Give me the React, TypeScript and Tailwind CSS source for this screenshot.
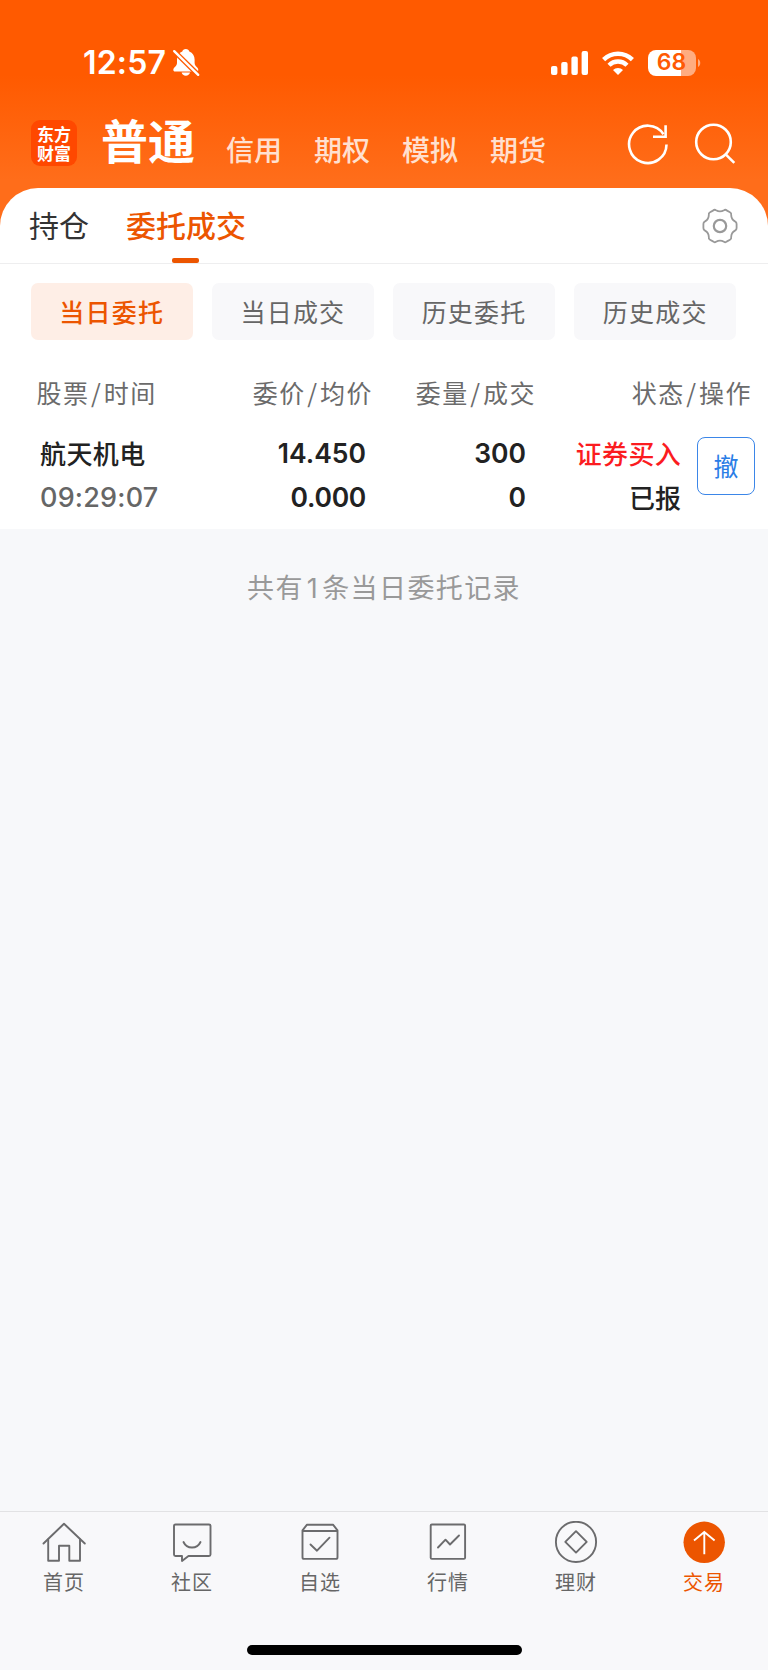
import type { ReactNode } from "react";
import clsx from "clsx";

const markets = ["信用", "期权", "模拟", "期货"];

const filters = ["当日委托", "当日成交", "历史委托", "历史成交"];

function BellOff() {
  return (
    <svg width="28" height="30" viewBox="0 0 28 30" className="ml-[6px] shrink-0">
      <defs>
        <mask id="bell-cut">
          <rect width="28" height="30" fill="#fff" />
          <path d="M1 2 L27 27.600" stroke="#000" strokeWidth="5" />
        </mask>
      </defs>
      <g mask="url(#bell-cut)" fill="#fff">
        <path d="M13.8 1c-1.9 0-3.2 1.2-3.5 2.4C6.800 4.700 5 7.800 5 11.500v3.300c0 1.700-.6 2.600-1.600 3.800-1 1.100-2.100 2-2.100 3.300 0 .9.700 1.500 1.700 1.500h21.600c1 0 1.700-.6 1.700-1.500 0-1.300-1.100-2.200-2.100-3.300-1-1.200-1.600-2.100-1.600-3.800v-3.300c0-3.700-1.800-6.800-5.300-8.100C17 2.200 15.700 1 13.800 1z" />
        <path d="M9.600 24.600h8.400c-.3 1.900-2.200 3.200-4.200 3.200s-3.900-1.300-4.200-3.200z" />
      </g>
      <path d="M2.200 3.200 L26.200 26.800" stroke="#fff" strokeWidth="2.400" strokeLinecap="round" />
    </svg>
  );
}

function Signal() {
  return (
    <svg width="38" height="24" viewBox="0 0 38 24" fill="#fff">
      <rect x="0" y="15" width="6.400" height="9" rx="2" />
      <rect x="10.200" y="11" width="6.400" height="13" rx="2" />
      <rect x="20.400" y="5.500" width="6.400" height="18.500" rx="2" />
      <rect x="30.600" y="0" width="6.400" height="24" rx="2" />
    </svg>
  );
}

function Wifi() {
  return (
    <svg width="32" height="24" viewBox="0 0 32 24" fill="none" stroke="#fff" strokeWidth="4.400">
      <path d="M1.600 8.600 A20.500 20.500 0 0 1 30.400 8.600" />
      <path d="M7 14.200 A12.800 12.800 0 0 1 25 14.200" />
      <path d="M16 24 L11 19 A7 7 0 0 1 21 19 Z" fill="#fff" stroke="none" />
    </svg>
  );
}

function Battery() {
  return (
    <div className="flex items-center">
      <div className="flex h-[26px] w-12 items-center justify-center rounded-[8px] bg-[linear-gradient(90deg,#fff_68.500%,#ffac80_68.500%)] pr-px font-['Inter',sans-serif] text-[23px] font-semibold text-[#ff5a04]">
        68
      </div>
      <svg width="5" height="8" viewBox="0 0 5 8" className="ml-px">
        <path d="M1 0 C4 1.500 4 6.500 1 8 Z" fill="#ffac80" />
      </svg>
    </div>
  );
}

function Refresh() {
  return (
    <svg width="42" height="42" viewBox="0 0 42 42" fill="none" stroke="#fff" strokeWidth="2.600">
      <path d="M39.500 21.500 A18.700 18.700 0 1 1 36.500 11.200" />
      <path d="M38.600 2.200 V13.800 H26" />
    </svg>
  );
}

function Search() {
  return (
    <svg width="42" height="42" viewBox="0 0 42 42" fill="none" stroke="#fff" strokeWidth="2.600">
      <circle cx="19.500" cy="19" r="17.300" />
      <path d="M31.700 31.300 L40.300 39.900" />
    </svg>
  );
}

function Gear() {
  return (
    <svg width="36" height="36" viewBox="0 0 36 36" fill="none" stroke="#999" strokeWidth="1.800" strokeLinejoin="round">
      <path d="M11 2.600 Q12.500 1.200 14 2.200 Q18 4.400 22 2.200 Q23.500 1.200 25 2.600 L28 4.300 Q29.600 5.100 29.200 7 Q29.200 11.400 33 13.400 Q34.700 14.200 34.600 16 V20 Q34.700 21.800 33 22.600 Q29.200 24.600 29.200 29 Q29.600 30.900 28 31.700 L25 33.400 Q23.500 34.800 22 33.800 Q18 31.600 14 33.800 Q12.500 34.800 11 33.400 L8 31.700 Q6.400 30.900 6.800 29 Q6.800 24.600 3 22.600 Q1.300 21.800 1.400 20 V16 Q1.300 14.200 3 13.400 Q6.800 11.400 6.800 7 Q6.400 5.100 8 4.300 Z" />
      <circle cx="18" cy="18" r="6.200" strokeWidth="2.200" />
    </svg>
  );
}

function TabIcon({ children }: { children: ReactNode }) {
  return (
    <svg width="44" height="44" viewBox="0 0 44 44" fill="none" stroke="#6b6b6d" strokeWidth="1.900" strokeLinejoin="round" strokeLinecap="round">
      {children}
    </svg>
  );
}

const tabs = [
  {
    label: "首页",
    icon: (
      <TabIcon>
        <path d="M1.500 22.500 L22 2.700 L42.800 22.500" />
        <path d="M6.200 18.500 V39.700 H17 V24.700 H27.300 V39.700 H38 V18.500" />
      </TabIcon>
    ),
  },
  {
    label: "社区",
    icon: (
      <TabIcon>
        <path d="M5.500 3.500 H39 Q40.500 3.500 40.500 5 V33.500 Q40.500 35 39 35 H18.500 L12 40 V35 H5.500 Q4 35 4 33.500 V5 Q4 3.500 5.500 3.500 Z" />
        <path d="M13.500 21 Q16 26.500 22 26.500 Q28 26.500 30.500 21" />
      </TabIcon>
    ),
  },
  {
    label: "自选",
    icon: (
      <TabIcon>
        <path d="M4.500 9.300 L9 3.700 H35 L39.500 9.300 V36.200 Q39.500 37.900 38 37.900 H6 Q4.500 37.900 4.500 36.200 Z" />
        <path d="M5 10 H39" />
        <path d="M12.500 23.500 L19 29.700 L31.500 16.700" />
      </TabIcon>
    ),
  },
  {
    label: "行情",
    icon: (
      <TabIcon>
        <rect x="4.700" y="3.500" width="34.400" height="34.400" rx="1.200" />
        <path d="M12 26.500 L19.500 18.700 L24 23.500 L33 14.500" />
      </TabIcon>
    ),
  },
  {
    label: "理财",
    icon: (
      <TabIcon>
        <circle cx="22" cy="20.900" r="20.100" />
        <path d="M22 10.200 L32.700 20.900 L22 31.600 L11.300 20.900 Z" />
      </TabIcon>
    ),
  },
  {
    label: "交易",
    active: true,
    icon: (
      <TabIcon>
        <circle cx="22.200" cy="21.300" r="20.700" fill="#ec5500" stroke="none" />
        <path d="M22.300 33.300 V12 M12 19.500 L22.300 11 L32.600 19.500" stroke="#fff" strokeLinecap="butt" strokeLinejoin="miter" />
      </TabIcon>
    ),
  },
];

function ColumnTitle({ first, second, className }: { first: string; second: string; className: string }) {
  return (
    <div className={className}>
      {first}
      <span className="mx-[1.500px]">/</span>
      {second}
    </div>
  );
}

export default function App() {
  return (
    <div className="flex h-[1670px] w-[768px] flex-col overflow-hidden bg-[#f7f8fa] font-['Noto_Sans_CJK_SC',sans-serif]">
      <header className="h-[238px] shrink-0 bg-[linear-gradient(180deg,#ff5a00_0px,#ff5a00_75px,#ff6d1a_180px)]">
        {/* status bar */}
        <div className="flex h-[104px] items-center justify-between pt-[21px] pr-[66px] pl-[83px]">
          <div className="flex items-center">
            <span className="pt-px font-['Inter',sans-serif] text-[32px] leading-none font-semibold tracking-[0.200px] text-white">12:57</span>
            <BellOff />
          </div>
          <div className="flex items-center">
            <Signal />
            <div className="mr-[14px] ml-[13px]">
              <Wifi />
            </div>
            <Battery />
          </div>
        </div>

        {/* account type switcher */}
        <div className="flex h-[84px] items-start pl-[31px]">
          <div className="mt-[16px] flex size-[46px] items-center justify-center rounded-[9px] bg-[#ff4800]">
            <p className="w-[34px] text-[17px] leading-[19px] font-bold break-all text-white">东方财富</p>
          </div>
          <h1 className="ml-[24px] text-[47px] leading-[70px] font-bold text-white">普通</h1>
          <nav className="mt-[25px] ml-[31px] flex gap-8">
            {markets.map((m) => (
              <span key={m} className="text-[28px] leading-[40px] font-medium text-[#ffe0d0]">
                {m}
              </span>
            ))}
          </nav>
          <div className="mt-[19px] mr-[32px] ml-auto flex gap-[25px]">
            <Refresh />
            <Search />
          </div>
        </div>
      </header>

      <section className="-mt-[50px] h-[341px] shrink-0 rounded-t-[38px] bg-white">
        <div className="flex h-[76px] items-start border-b border-[#eeeeef] pl-[29px]">
          <span className="mt-[14px] text-[30px] leading-[44px] text-[#333]">持仓</span>
          <div className="mt-[14px] ml-[37px] flex flex-col items-center">
            <span className="text-[30px] leading-[44px] font-medium text-[#ec5500]">委托成交</span>
            <span className="mt-[12px] mr-px h-[5px] w-[27px] rounded-[2px] bg-[#ec5500]" />
          </div>
          <div className="mt-[20px] mr-[30px] ml-auto">
            <Gear />
          </div>
        </div>

        <div className="mt-[19px] flex justify-between pr-[32px] pl-[31px]">
          {filters.map((f, i) => (
            <button
              key={f}
              className={clsx(
                "h-[57px] w-[161.500px] rounded-[7px] text-[25px] tracking-[1.200px]",
                i === 0 ? "bg-[#feeee6] font-medium text-[#ec5500]" : "bg-[#f8f8fa] text-[#666]"
              )}
            >
              {f}
            </button>
          ))}
        </div>

        <div className="mt-[33px] grid h-[38px] grid-cols-[200px_173px_163px_216px] items-center text-[25px] leading-none tracking-[1.500px] text-[#6b6b6b]">
          <ColumnTitle first="股票" second="时间" className="pl-[36.500px]" />
          <ColumnTitle first="委价" second="均价" className="text-right" />
          <ColumnTitle first="委量" second="成交" className="text-right" />
          <ColumnTitle first="状态" second="操作" className="text-right" />
        </div>

        <div className="mt-[20px] grid h-[88px] grid-cols-[200px_166px_160px_155px_1fr] text-[26px] leading-[44px] font-medium text-[#222]">
          <div className="pl-[40px]">
            <div className="tracking-[0.400px]">航天机电</div>
            <div className="mt-px font-['Inter',sans-serif] text-[27px] tracking-[0.200px] text-[#666]">09:29:07</div>
          </div>
          <div className="text-right font-['Inter',sans-serif] text-[26.500px] font-semibold">
            <div>14.450</div>
            <div className="tracking-[-0.300px]">0.000</div>
          </div>
          <div className="text-right font-['Inter',sans-serif] text-[26.500px] font-semibold">
            <div>300</div>
            <div>0</div>
          </div>
          <div className="text-right">
            <div className="tracking-[0.300px] text-[#fb1c1f]">证券买入</div>
            <div>已报</div>
          </div>
          <button className="mt-[6px] ml-[16px] size-[58px] rounded-[8px] border border-[#3b86e8] pb-px text-[25px] leading-none font-normal text-[#2b7de6]">
            撤
          </button>
        </div>
      </section>

      <p className="mt-[39px] text-center text-[27px] leading-[38px] tracking-[1.400px] text-[#999]">
        共有<span className="mx-[3px] font-['Inter',sans-serif]">1</span>条当日委托记录
      </p>

      <footer className="mt-auto flex h-[159px] shrink-0 flex-col items-center border-t border-[#e2e2e4] bg-[#f8f8fa]">
        <nav className="grid w-full grid-cols-6">
          {tabs.map((t) => (
            <div key={t.label} className="flex flex-col items-center pt-[9px]">
              {t.icon}
              <span className={clsx("mt-[2px] text-[20px] leading-[30px] tracking-[1px]", t.active ? "text-[#ec5500]" : "text-[#666]")}>
                {t.label}
              </span>
            </div>
          ))}
        </nav>
        <div className="mt-auto mb-[15px] h-[10px] w-[275px] rounded-full bg-black" />
      </footer>
    </div>
  );
}
